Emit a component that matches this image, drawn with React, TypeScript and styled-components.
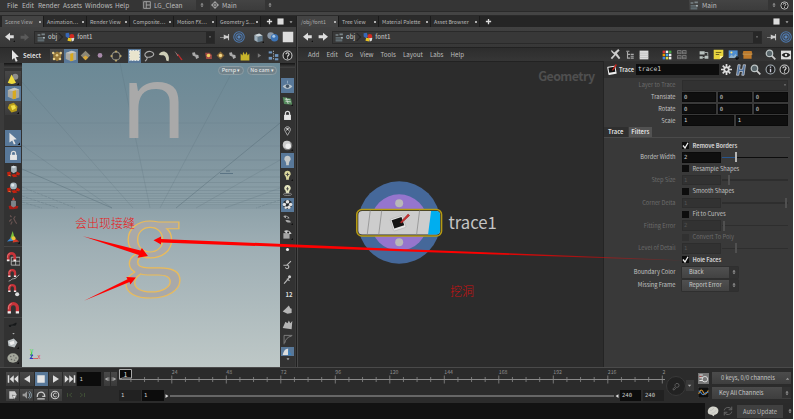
import React from "react";
import styled, { createGlobalStyle, css } from "styled-components";

const UI = `"Noto Sans CJK SC", "Open Sans", sans-serif`;

const Global = createGlobalStyle`
  html, body { margin: 0; background: #fff; }
  * { box-sizing: border-box; }
`;

/* ---------- icons, all on a 16x16 grid ---------- */

const cube = (c: string, side: string, top: string) => (
  <g>
    <path d="M2 4.5 7 7v8L2 12z" fill={c} />
    <path d="M7 7l7-2v8l-7 2z" fill={side} />
    <path d="M2 4.5 9 2l5 3-7 2z" fill={top} />
  </g>
);
const corner = <path d="M13 16h3v-3z" fill="#111" />;
const magnet = (x: number, y: number, s: number) => (
  <g transform={`translate(${x} ${y}) scale(${s})`} fill="none">
    <path d="M2 13V7a5 5 0 0 1 10 0v6" stroke="#c8343a" strokeWidth="4" />
    <path d="M2 11.5V14M12 11.5V14" stroke="#eee" strokeWidth="4" />
    <path d="M1 9V6a5 5 0 0 1 4-4" stroke="#e98a8a" strokeWidth="1" />
  </g>
);
const handles = (
  <g fill="#c3210f">
    <path d="M0 9l4-1 1 3-4 3zM12 8l4 2-1 3-4-1zM5 12l5-1 3 3-5 1z" />
    <path d="M1 13l3-1 1 2z" fill="#f07030" />
  </g>
);

const ICONS: Record<string, React.ReactNode> = {
  layout: <g fill="none" stroke="#bbb" strokeWidth="1.5"><rect x="1.5" y="1.5" width="13" height="13" /><path d="M6.5 1.5v13M6.5 8h8" /></g>,
  compass: <g fill="none" stroke="#bbb" strokeWidth="1.6"><circle cx="8" cy="8" r="5" /><path d="M8 0v5M8 11v5M0 8h5M11 8h5" /><circle cx="8" cy="8" r="1" fill="#ccc" /></g>,
  updown: <path d="M8 2l4 5H4zM8 14l4-5H4z" fill="#999" />,
  back: <><path d="M0 7.5 8 1v4h6v5H8v4z" fill="#ddd" />{corner}</>,
  fwd: <path d="M16 7.5 8 1v4H1v5h7v4z" fill="#ddd" />,
  fwdOff: <path d="M16 7.5 8 1v4H1v5h7v4z" fill="#5a5a5a" />,
  clap: <g fill="#7a8488"><path d="M1 2l5 0v3H1zM8 1h6v3H8z" /><path d="M1 7h8v3H1zM1 11h12v4H1z" fill="#5f6b70" /><path d="M10 7h4v3h-4z" fill="#a8b4b8" /></g>,
  font: <g><path d="M1 2l5-1 2 6-3 3-4-3z" fill="#3768b8" /><circle cx="11" cy="7" r="3.8" fill="#d22a20" /><path d="M5 9l6 1-1 5-6-1z" fill="#e8c324" /><path d="M10 10l5-1-1 5-3 1z" fill="#ddd" /></g>,
  pin: <path d="M0 8h6V4l4 2h3V3h1.5v10H13v-3h-3l-4 2V8.8H0z" fill="#ccc" />,
  target: <g fill="none" stroke="#4d78ad" strokeWidth="1.5"><circle cx="8" cy="8" r="7" /><circle cx="8" cy="8" r="4.2" /><circle cx="8" cy="8" r="1.6" fill="#80a4cf" /></g>,
  cubeBlue: <>{cube("#9fb0bd", "#62798a", "#cdd8de")}{corner}</>,
  spheres: <><circle cx="5" cy="6" r="4.5" fill="#8a98a8" /><circle cx="10" cy="9" r="5" fill="#3c73b5" /><circle cx="9" cy="7" r="2" fill="#a8c7e6" /></>,
  square: <rect x="1" y="1" width="14" height="14" fill="#ddd" />,
  down: <path d="M4 6h8l-4 5z" fill="#aaa" />,
  up: <path d="M4 11h8L8 6z" fill="#999" />,
  plus: <path d="M6.5 2h3v4.500H14v3H9.500V14h-3V9.500H2v-3h4.500z" fill="#ddd" />,
  cursor: <path d="M4 0l9 9-4 .5 2.500 5-2.500 1-2-5L4 13z" fill="#e4e4e4" />,
  points: <><path d="M3 5l5-3 6 3-1 7-5 3-5-4z" fill="#98793a" /><g fill="#e8cf8c"><circle cx="3" cy="4" r="1.700" /><circle cx="13" cy="4" r="1.700" /><circle cx="8" cy="7" r="1.700" /><circle cx="4" cy="12" r="1.700" /><circle cx="12" cy="12" r="1.700" /></g></>,
  cubeFace: <><path d="M1 4l8-3 6 2v10l-7 2-7-3z" fill="#a9a9a2" /><path d="M1 4l8-3 6 2-7 2z" fill="#c4c6c2" /><path d="M7 5l4-1v10l-4 1z" fill="#d8aa1f" /></>,
  diamond: <><path d="M8 1l7 7-7 7-7-7z" fill="#8c8878" /><path d="M8 8l4 3-4 4-4-4z" fill="#d9a93a" /></>,
  orb: <circle cx="8" cy="7" r="3.800" fill="#a88aab" />,
  ringDot: <><circle cx="8" cy="8" r="5.500" fill="none" stroke="#8c8c84" strokeWidth="1.600" /><g fill="#b9a56c"><circle cx="8" cy="2" r="1.500" /><circle cx="8" cy="14" r="1.500" /><circle cx="2" cy="8" r="1.500" /><circle cx="14" cy="8" r="1.500" /></g></>,
  boxSel: <rect x="2" y="2" width="12" height="12" fill="#e8e4cd" stroke="#fff" strokeDasharray="2 1.500" />,
  lasso: <path d="M5 10C-1 6 5 1 10 2s6 5 1 7-8-1-6 1-1 3-2 5" fill="none" stroke="#aaa" strokeWidth="1.500" />,
  brush: <path d="M1 6c3-5 8-5 11-2 3 4 3 7 2 11l-3-1c0-4-2-7-4-7s-4 0-6-1z" fill="#cfcfb8" />,
  laser: <><path d="M2 1l6 7-1 1z" fill="#b99" /><path d="M6 6l2 0 6 8-2 1z" fill="#c02a2a" /></>,
  snapA: <path d="M2 3l5-1 1 4 5 1 1 5-5 2-1-4-5-2z" fill="#aaa" />,
  snapB: <><path d="M2 3h8l4 4v7H4z" fill="#a14a46" /><circle cx="8" cy="8" r="3.200" fill="#f0cf60" /></>,
  snapC: <><path d="M8 1l7 7-7 7-7-7z" fill="#8b6a35" /><circle cx="8" cy="8" r="3" fill="#f3d889" /></>,
  crown: <path d="M1 4l3 3 1-6 3 5 3-5 1 6 3-3v11H1z" fill="#c9b52b" />,
  play: <path d="M5 4l6 4-6 4z" fill="#777" />,
  blueNodes: <><path d="M8 1v14" stroke="#ccc" strokeDasharray="2 1.500" /><g fill="#6f95bd"><rect x="1" y="2" width="5" height="3" /><rect x="1" y="10" width="5" height="4" /><rect x="10" y="6" width="5" height="4" /><rect x="10" y="12" width="5" height="3" /></g></>,
  help: <><circle cx="8" cy="8" r="6.500" fill="#222" stroke="#ccc" strokeWidth="1.500" /><path d="M5.700 6.300c0-3 4.600-3 4.600 0 0 1.700-2.300 1.700-2.300 3.400M8 11v1.600" stroke="#ddd" strokeWidth="1.700" fill="none" /></>,
  info: <><circle cx="8" cy="8" r="6.500" fill="#222" stroke="#aab4bb" strokeWidth="1.500" /><path d="M8 7v5M8 3.800v1.700" stroke="#ccd" strokeWidth="2" /></>,
  cone: <><circle cx="11" cy="5" r="4" fill="#8c8c8c" /><path d="M6 2l6 11c-3 2-8 2-11 0z" fill="#eedb3c" />{corner}</>,
  gold: <><path d="M3 3l6-2 5 5-1 6-7 2-5-6z" fill="#b89d1a" /><path d="M5 5l5-1 2 4-5 3z" fill="#f1e04a" />{corner}</>,
  cursorHl: <><path d="M3 1l9 8-4 .5 2.500 5-2 1-2-5L3 13z" fill="#e4e4e4" />{corner}</>,
  lock: <><path d="M5 8V5a3 3 0 0 1 6 0v3" fill="none" stroke="#ddd" strokeWidth="1.800" /><rect x="3" y="7" width="10" height="7.500" fill="#e6e6e6" /></>,
  move: <>{handles}<path d="M5 2l3-1 4 1v6l-4 2-3-2z" fill="#a5b0b6" /><path d="M5 2l3-1 4 1-4 2z" fill="#d4dde2" /></>,
  rotate: <>{handles}<circle cx="8" cy="6" r="4.200" fill="#a5b4bd" /><circle cx="7" cy="5" r="2" fill="#dde6ea" /></>,
  scale: <><path d="M2 11l4-1 4 1 4 0-1 3-5 1-5 0z" fill="#a91d16" /><path d="M8 0l2 4H6z" fill="#e03a30" /><path d="M5 5l3-1 3 1v6l-3 2-3-2z" fill="#7d858a" /></>,
  pose: <path d="M4 2l2 2M11 3L9 6l2 4 2 3M6 7l-3 3M7 10l-2 4" stroke="#6a5553" strokeWidth="1.500" fill="none" />,
  axes: <><path d="M7 0l2.500 9H4z" fill="#7ac13c" /><path d="M8 8l7 5-8 1z" fill="#d03a2a" /><path d="M0 13l5-5 3 4z" fill="#3c86d0" /><circle cx="8" cy="9" r="2.500" fill="#e9c83b" />{corner}</>,
  magGrid: <><path d="M6 6h10v9H6zM11 6v9M6 10.500h10" fill="none" stroke="#b8b8b8" />{magnet(1, 0, 0.75)}</>,
  magCurve: <><path d="M2 15c4-1 3-3 6-3s4-2 7-5" fill="none" stroke="#bbb" />{magnet(1.5, 0, 0.7)}</>,
  magPoint: <>{magnet(1.5, 0, 0.7)}<circle cx="12.500" cy="12.500" r="2.500" fill="#ddd" /></>,
  mag: <>{magnet(0.8, 0, 1)}</>,
  plane: <><path d="M1 8l6-1 6-3 1 2-4 5-8 0z" fill="#17191a" /><path d="M5 10h6" stroke="#555" /></>,
  paint: <><path d="M1 5l8-3 5 5-4 7-8-2z" fill="#bcc2c4" /><path d="M3 7l6-2 1 4-5 2z" fill="#eee" />{corner}</>,
  disc: <><ellipse cx="8" cy="8" rx="7.500" ry="6.300" fill="#a3a69b" /><g fill="#666"><circle cx="5" cy="6" r="1" /><circle cx="9" cy="5" r="1" /><circle cx="12" cy="8" r="1" /><circle cx="6" cy="10" r="1" /><circle cx="10" cy="11" r="1" /></g>{corner}</>,
  eyeGrid: <><path d="M1 9c4-4 10-4 14 0-4 5-10 5-14 0z" fill="#b9c4cc" /><circle cx="8" cy="9" r="2.500" fill="#3f5163" /><path d="M8 1v4" stroke="#a9bdcf" /></>,
  green: <><path d="M1 3l12 2 2 9-12-1z" fill="#548a5b" /><path d="M4 6l8 1M5 9l8 1M6 4l3 9" stroke="#cbd6cc" strokeWidth="1.300" />{corner}</>,
  pinX: <><path d="M8 15L4 8a4.200 4.200 0 1 1 8 0z" fill="none" stroke="#bbb" strokeWidth="1.200" /><path d="M6.200 4l3.600 4M9.800 4L6.200 8" stroke="#fff" strokeWidth="1.400" /></>,
  ball: <><circle cx="8" cy="8" r="7" fill="#777" /><circle cx="7" cy="7" r="5.800" fill="#ccc" /><circle cx="9" cy="9" r="4" fill="#eee" />{corner}</>,
  bulb: <path d="M8 1a4.500 4.500 0 0 1 3 8l-1 3v3H6v-3L5 9a4.500 4.500 0 0 1 3-8z" fill="#c4c8c8" />,
  bulbY: <><path d="M8 1a4.500 4.500 0 0 1 3 8l-1 3v2H6v-2L5 9a4.500 4.500 0 0 1 3-8z" fill="#d9d69d" /><path d="M8 4v5M5.500 6.500h5" stroke="#444" strokeWidth="1.300" />{corner}</>,
  bulbG: <><path d="M8 0a4.500 4.500 0 0 1 3 8l-1 4H6L5 8a4.500 4.500 0 0 1 3-8z" fill="#e4e4bd" /><path d="M8 3v5M6 5.500h4" stroke="#444" strokeWidth="1.200" /><ellipse cx="8" cy="13.500" rx="6" ry="1.700" fill="none" stroke="#aaa" /></>,
  cluster: <><circle cx="8" cy="8" r="6.500" fill="#1d2126" /><g fill="#e2e2e2"><circle cx="8" cy="4" r="2.700" /><circle cx="12.500" cy="8" r="2.500" /><circle cx="3.500" cy="8" r="2.500" /><circle cx="10" cy="12" r="2.500" /><circle cx="5.500" cy="12.500" r="2" /></g></>,
  eyes: <><path d="M2 3c3-2 7 0 9 3-4 1-8 0-9-3zM5 9c3-1 7 0 8 3-4 1-7 0-8-3z" fill="#aaa" /><circle cx="7" cy="5" r="1.300" fill="#222" />{corner}</>,
  cubeEyes: <><rect x="2" y="6" width="9" height="8" fill="#a5a5a5" /><path d="M3 3c4-3 9 0 11 4-4 1-9 0-11-4z" fill="#ccc" /><circle cx="9" cy="5" r="1.500" fill="#222" />{corner}</>,
  dot: <circle cx="8" cy="8" r="2.200" fill="#eee" />,
  key1: <path d="M2 9h5l6-6M5 12a2.500 2.500 0 1 0 3-3" fill="none" stroke="#bbb" strokeWidth="1.600" />,
  key2: <><path d="M3 14l7-8" stroke="#bbb" strokeWidth="1.600" /><circle cx="11" cy="4" r="2.200" fill="#ccc" /><path d="M7 7l4 3" stroke="#bbb" strokeWidth="1.600" /></>,
  poly: <path d="M1 11l5-5 4-4 2 4 2 1v6l-6 1z" fill="#b5b5b5" />,
  poly2: <path d="M1 13L5 4l3 2 2-4 2 4 3-3-1 12z" fill="#b5b5b5" />,
  angle: <path d="M3 15V2h12M14 3C8 4 5 8 4 13" fill="none" stroke="#999" />,
  fin: <><path d="M1 13c2-8 5-9 8-9v9z" fill="#ddd" /><path d="M9 13V4l5 9z" fill="#3d83bf" /></>,
  tools: <path d="M2 1l4 4 1.500-1L12 0l2 2-4 4 5 7-2 2-5-6-5 6-2-2 5-5-4-4z" fill="#ccc" />,
  tree: <path d="M2 2h5M4 3v11M4 7h4M4 13h4M9 7h5M9 13h5M9 10h5" stroke="#aaa" strokeWidth="1.800" />,
  list: <><path d="M1 1h14v14H1z" fill="#ddd" /><path d="M1 5h14M1 8.500h14M1 12h14" stroke="#aaa" strokeWidth=".8" /></>,
  swatches: <>{["#d33", "#eee", "#4a4", "#e90", "#4ae", "#eee", "#48d", "#dd4", "#eee"].map((c, i) => <rect key={i} x={1 + (i % 3) * 5} y={1 + Math.floor(i / 3) * 5} width="4" height="4" fill={c} />)}</>,
  gridOff: <>{[0, 1, 2, 3].map((i) => <g key={i} fill="none" stroke="#888" strokeWidth="1.200"><rect x={1 + (i % 2) * 8} y={1 + Math.floor(i / 2) * 8} width="5.500" height="5" /><path d={`M${1 + (i % 2) * 8} ${3.5 + Math.floor(i / 2) * 8}h5`} /></g>)}</>,
  nodes: <g fill="#b9c2bf"><path d="M1 2h8v5H1zM9 9h6v5H9zM1 10h5v4H1z" /><path d="M9 4h5v5M6 12h3" fill="none" stroke="#b9c2bf" strokeWidth="1.300" /></g>,
  note: <><path d="M1 1h14v9l-5 5H1z" fill="#e7d53e" /><path d="M10 15v-5h5z" fill="#fff3a0" /><path d="M4 5h8M4 8h5" stroke="#554d15" strokeWidth="1.200" /></>,
  image: <><path d="M1 2h13v11H1z" fill="#4e8ed0" /><path d="M1 13l4-5 3 3 3-4 3 6z" fill="#8fb0c8" /><circle cx="5" cy="5" r="1.500" fill="#ffe37a" /><path d="M10 13h6M13 10v6" stroke="#000" strokeWidth="1.500" /></>,
  chest: <><path d="M2 3h12l1 4H1zM2 8h12v6H2z" fill="#bf7a2a" /><path d="M1 7.500h14" stroke="#e8ab54" strokeWidth="1.500" /></>,
  search: <><circle cx="6.500" cy="6.500" r="4.700" fill="#59666b" stroke="#bcc4c4" strokeWidth="1.800" /><path d="M10 10l5 5" stroke="#ccc" strokeWidth="2.500" /></>,
  eyeBox: <><rect x="0" y="1" width="16" height="14" fill="#ddd" /><path d="M1 8c4-5 10-5 14 0-4 5-10 5-14 0z" fill="#222" /><circle cx="8" cy="8" r="2" fill="#ddd" /></>,
  trace: <g transform="rotate(-10 8 8)"><rect x="1" y="3" width="12" height="12" rx="1" fill="#eee" /><rect x="2.500" y="4.500" width="9" height="7.500" fill="#111" /><path d="M7 9l7-8 1.500 1.500-7 7z" fill="#c8231b" /></g>,
  gear: <><path d="M8 0v16M0 8h16M2.500 2.500l11 11M13.500 2.500l-11 11" stroke="#ddd" strokeWidth="2.500" /><circle cx="8" cy="8" r="4.500" fill="#ddd" /><circle cx="8" cy="8" r="2" fill="#333" /></>,
  hda: <path d="M4 1h3L6 7h4l1-6h3l-2 14H9l1-5H6l-1 5H2z" fill="#4c6f9c" stroke="#ddd" strokeWidth=".9" />,
  first: <path d="M1 3h2v10H1zM9 3v10L3.500 8zM15 3v10L9.500 8z" fill="#ddd" />,
  prev: <path d="M12 3v10L4 8z" fill="#ddd" />,
  stop: <path d="M3 3h10v10H3z" fill="#e4e4e4" />,
  next: <path d="M4 3v10l8-5z" fill="#ddd" />,
  last: <path d="M13 3h2v10h-2zM7 3v10l5.500-5zM1 3v10l5.500-5z" fill="#ddd" />,
  stepB: <path d="M10 3v10L2 8zM12 3h2v10h-2z" fill="#aaa" />,
  stepF: <path d="M6 3v10l8-5zM2 3h2v10H2z" fill="#aaa" />,
  doc: <><path d="M2 2h9l3 5-3 7H2z" fill="#ccc" /><path d="M7 8l8 3-4 1-1 4z" fill="#fff" stroke="#222" strokeWidth=".7" /></>,
  speaker: <><path d="M1 6h3l4-4v12l-4-4H1z" fill="#999" /><path d="M10 4c3 2 3 6 0 9M12 2c4 4 4 9 0 12" fill="none" stroke="#9bb4c4" strokeWidth="1.300" /></>,
  loop: <path d="M2 11c0-10 12-10 12-1l-4 0M2 14h12" fill="none" stroke="#ccc" strokeWidth="2" />,
  clock: <><circle cx="8" cy="8" r="6" fill="none" stroke="#ccc" strokeWidth="1.800" /><path d="M10.500 6a3 3 0 1 0 0 4" fill="none" stroke="#ccc" strokeWidth="1.500" /></>,
  keyL: <path d="M3 4v8M12 4L7 8l5 4" fill="none" stroke="#46593a" strokeWidth="1.500" />,
  keyR: <path d="M13 4v8M4 4l5 4-5 4" fill="none" stroke="#46593a" strokeWidth="1.500" />,
  channels: <><rect width="16" height="16" fill="#777" /><path d="M2 3h5M2 7h5M2 11h5" stroke="#e4e4e4" strokeWidth="1.500" /><circle cx="10" cy="9" r="4" fill="none" stroke="#ddd" strokeWidth="1.400" /><path d="M2 5h3" stroke="#c33" /></>,
  graph: <><rect width="16" height="16" fill="#0d0d0d" stroke="#555" /><path d="M1 10c3-8 5-6 7-2s4 3 7-3" fill="none" stroke="#d99a35" strokeWidth="1.500" /><path d="M1 6c4 0 4 6 7 5s3-5 7-3" fill="none" stroke="#4b83c4" strokeWidth="1.500" /></>,
  brain: <><path d="M1 9c0-8 12-9 14-3 1 4-2 7-5 7l-1 2-3-2C3 13 1 12 1 9z" fill="#d4d4cc" /><path d="M4 7c2 1 4-1 5-3M6 11c3 0 5-2 6-4" fill="none" stroke="#bbb" /></>,
  refresh: <path d="M2 7c1-6 10-6 12-1M14 1v5h-5M14 9c-1 6-10 6-12 1M2 15v-5h5" fill="none" stroke="#666" strokeWidth="1.600" />,
  keyBig: <path d="M9 2.500a3.500 3.500 0 1 1 0 7 3.500 3.500 0 0 1-1-.2L4 14H2v-2l4-4A3.500 3.500 0 0 1 9 2.500z" fill="none" stroke="#666" strokeWidth="1.500" />,
};

const Svg = styled.svg<{ $w: number }>`
  display: block;
  flex: none;
  width: ${(p) => p.$w}px;
  height: ${(p) => p.$w}px;
`;
const Icon = ({ n, s = 10 }: { n: string; s?: number }) => (
  <Svg $w={s} viewBox="0 0 16 16">{ICONS[n]}</Svg>
);

/* ---------- frame ---------- */

const Window = styled.div`
  position: relative;
  width: 793px;
  height: 419px;
  display: flex;
  flex-direction: column;
  overflow: hidden;
  background: #2c2c2c;
  color: #bdbdbd;
  font: 6.2px/10px ${UI};
  white-space: nowrap;
  cursor: default;
`;
const Gap = styled.div<{ $w?: number; $h?: number }>`
  flex: none;
  width: ${(p) => p.$w ?? 0}px;
  height: ${(p) => p.$h ?? 0}px;
`;
const Grow = styled.div`flex: 1;`;

const TopMenu = styled.div`
  flex: none;
  height: 11px;
  display: flex;
  align-items: center;
  background: #353535;
  font-size: 6.5px;
  line-height: 9px;
  padding-bottom: 1px;
`;
const TopItem = styled.span<{ $w: number }>`
  width: ${(p) => p.$w}px;
`;
const Combo = styled.div<{ $w: number }>`
  width: ${(p) => p.$w}px;
  height: 10px;
  display: flex;
  align-items: center;
  gap: 3px;
  background: linear-gradient(#444, #3c3c3c);
  padding: 0 1px;
`;
const Seam = styled.div`
  flex: none;
  height: 5px;
  background: linear-gradient(#2a2a2a 0 1px, #444 1px 4px, #2a2a2a 4px);
`;

const Workspace = styled.div`
  flex: none;
  display: flex;
  height: 351px;
  background: #3b3b3b;
`;
const Pane = styled.section<{ $w: number }>`
  flex: none;
  width: ${(p) => p.$w}px;
  display: flex;
  flex-direction: column;
`;
const TabStrip = styled.div`
  flex: none;
  height: 11px;
  display: flex;
  align-items: stretch;
  background: #252525;
`;
const PaneTab = styled.div<{ $w: number; $on?: boolean }>`
  width: ${(p) => p.$w}px;
  display: flex;
  align-items: center;
  justify-content: space-between;
  padding: 0 2px 0 3px;
  font-size: 5.3px;
  border-right: 1px solid #1b1b1b;
  background: ${(p) => (p.$on ? "#434343" : "#2b2b2b")};
  color: ${(p) => (p.$on ? "#aaa" : "#b9b9b9")};
`;
const Dot = styled.i`
  width: 2px;
  height: 2px;
  background: #b0b0b0;
`;
const TabTools = styled.div`
  display: flex;
  align-items: center;
  gap: 4px;
  padding-left: 5px;
`;
const PathBar = styled.div`
  flex: none;
  height: 20px;
  display: flex;
  align-items: center;
  padding-left: 5px;
  background: linear-gradient(#414141, #373737);
`;
const PathField = styled.div<{ $w: number }>`
  width: ${(p) => p.$w}px;
  height: 13px;
  display: flex;
  align-items: center;
  gap: 2px;
  padding-left: 2px;
  background: #383838;
  border: 1px solid #2a2a2a;
  font-size: 6px;
  font-weight: 500;
`;
const DropEnd = styled.div`
  margin-left: auto;
  width: 8px;
  height: 11px;
  display: flex;
  align-items: center;
  justify-content: center;
  background: #272727;
`;
const Chevron = styled.i`
  width: 6px;
  height: 6px;
  margin: 0 1px 0 -3px;
  border: solid #252525;
  border-width: 1px 1px 0 0;
  transform: rotate(45deg);
`;
const ToolRow = styled.div<{ $h: number }>`
  flex: none;
  height: ${(p) => p.$h}px;
  display: flex;
  align-items: center;
  background: linear-gradient(#2d2d2d, #363636);
  border-top: 1px solid #222;
`;
const Cell = styled.div<{ $w: number; $h?: number; $hl?: boolean; $box?: boolean }>`
  flex: none;
  width: ${(p) => p.$w}px;
  height: ${(p) => p.$h ?? 14}px;
  display: flex;
  align-items: center;
  justify-content: center;
  overflow: hidden;
  ${(p) => p.$box && css`background: linear-gradient(#484848, #3a3a3a);`}
  ${(p) => p.$hl && css`background: #587899;`}
`;
const Bold = styled.b<{ $w: number; $s?: number }>`
  width: ${(p) => p.$w}px;
  font-size: ${(p) => p.$s ?? 5.9}px;
  color: #ddd;
`;

/* ---------- scene view ---------- */

const SceneBody = styled.div`
  flex: 1;
  display: flex;
  min-height: 0;
`;
const Shelf = styled.div<{ $w: number }>`
  width: ${(p) => p.$w}px;
  margin-left: ${(p) => (p.$w > 15 ? 4 : 0)}px;
  background: #323232;
  display: flex;
  flex-direction: column;
  align-items: center;
  overflow: hidden;
`;
const ShelfHead = styled.div`
  flex: none;
  align-self: stretch;
  height: 5px;
  background: linear-gradient(#151515, #444);
`;
const Rule = styled.div`
  flex: none;
  align-self: stretch;
  height: 1px;
  background: #444;
`;
const Viewport = styled.div`
  position: relative;
  width: 258px;
  background: linear-gradient(#6b8996 0%, #798f9a 23%, #8ca0a8 46%, #9eaeb4 60%, #bec8c7 100%);
`;
const Fill = styled.svg`
  display: block;
  width: 100%;
  height: 100%;
  overflow: visible;
`;
const CamBadges = styled.div`
  position: absolute;
  top: 3px;
  right: 3px;
  display: flex;
  gap: 3px;
`;
const Badge = styled.span<{ $w: number }>`
  width: ${(p) => p.$w}px;
  height: 9px;
  border-radius: 5px;
  border: 1px solid #8c9da4;
  background: #71828a;
  color: #eee;
  font-size: 5.4px;
  line-height: 7px;
  text-align: center;
`;

const horizon = [123, 146, 160, 170, 177, 182.5, 187, 190.5, 193.5, 196, 198.5, 200.5, 202.5, 204.5, 206, 208];

const Scene = () => (
  <Viewport>
    <Fill viewBox="22 63 258 304">
      <g stroke="#4c626d" strokeWidth=".6" fill="none">
        {horizon.map((y, i) => <path key={y} d={`M22 ${y}H280`} opacity={i < 2 ? 0.22 : 0.32} />)}
        {[[22, 82, 133, 208], [22, 145, 112, 208], [120, 63, 150, 208], [230, 76, 160, 208], [280, 160, 196, 208], [280, 188, 225, 208]].map((l, i) => (
          <path key={i} d={`M${l[0]} ${l[1]}L${l[2]} ${l[3]}`} opacity=".3" />
        ))}
        <path d="M22 169L112 208M280 123L176 208" opacity=".6" />
        <path d="M22 187L75 208M22 196l36 12M22 202l20 6M280 200l-24 8" opacity=".4" strokeDasharray="3 1" />
        <path d="M220 173.500h13M226 171h4" stroke="#3f5a70" />
      </g>
      <text x="120" y="138" fontFamily="Open Sans" fontSize="103" textLength="67.500" lengthAdjust="spacingAndGlyphs" fill="#a9a9a9">n</text>
      <text x="120.500" y="274" fontFamily="Noto Sans CJK SC" fontSize="96" textLength="61" lengthAdjust="spacingAndGlyphs" fill="#a9a9a9" stroke="#e9bb5b" strokeWidth="1.200">g</text>
      <path d="M31 358.500h7" stroke="#c66" />
      <path d="M31.500 358.500v-6" stroke="#4c4" />
      <path d="M30 355h3l-3 3.500h3" fill="none" stroke="#33c" />
      <text x="30" y="352.500" fontFamily="Noto Sans CJK SC" fontSize="6" fill="#3d3">y</text>
      <text x="37.500" y="358.500" fontFamily="Noto Sans CJK SC" fontSize="6" fill="#d44">x</text>
    </Fill>
    <CamBadges><Badge $w={26}>Persp ▾</Badge><Badge $w={30}>No cam ▾</Badge></CamBadges>
  </Viewport>
);

const leftTools: [string, number, number?, string?][] = [
  ["", 3], ["cone", 15, 12, "b"], ["cubeFace", 15, 13, "h"], ["gold", 14, 12, "b"], ["", 15],
  ["cursorHl", 16, 13, "h"], ["", 1], ["lock", 16, 11, "h"], ["move", 16, 13], ["rotate", 16, 13],
  ["scale", 17, 13], ["pose", 16, 12], ["axes", 18, 13], ["-", 1], ["", 2], ["magGrid", 19, 14],
  ["magCurve", 14, 13], ["magPoint", 17, 13], ["mag", 18, 13], ["-", 1], ["plane", 13, 10],
  ["down", 4, 5], ["paint", 16, 12], ["disc", 14, 12],
];
const rightTools: [string, boolean?][] = [
  ["eyeGrid", true], ["green"], ["lock"], ["pinX"], ["ball"], ["bulb", true], ["bulbY"], ["bulbG"],
  ["cluster", true], ["eyes"], ["cubeEyes"], ["dot"], ["key1"], ["key2"], ["12"], ["poly"], ["poly2"], ["angle"],
];
const Count = styled.span`
  font: bold 6px/8px ${UI};
  color: #ddd;
  padding-left: 3px;
`;

const SceneTools = () => (
  <ToolRow $h={16}>
    <Gap $w={8} />
    <Cell $w={14}><Icon n="cursor" s={12} /></Cell>
    <Gap $w={1} />
    <Bold $w={27}>Select</Bold>
    <Cell $w={14} $box><Icon n="points" s={12} /></Cell>
    <Cell $w={14} $hl><Icon n="cubeFace" s={12} /></Cell>
    <Cell $w={15}><Icon n="diamond" s={11} /></Cell>
    <Cell $w={14}><Icon n="orb" s={10} /></Cell>
    <Cell $w={17}><Icon n="ringDot" s={12} /></Cell>
    <Gap $w={4} />
    <Cell $w={13} $hl><Icon n="boxSel" s={13} /></Cell>
    <Cell $w={15}><Icon n="lasso" s={12} /></Cell>
    <Cell $w={15}><Icon n="brush" s={12} /></Cell>
    <Cell $w={15}><Icon n="laser" s={11} /></Cell>
    <Gap $w={4} />
    <Cell $w={11}><Icon n="snapA" s={9} /></Cell>
    <Cell $w={14}><Icon n="snapB" s={9} /></Cell>
    <Cell $w={11}><Icon n="snapC" s={9} /></Cell>
    <Cell $w={13}><Icon n="snapA" s={9} /></Cell>
    <Cell $w={12}><Icon n="crown" s={10} /></Cell>
    <Cell $w={17}><Icon n="play" s={9} /></Cell>
    <Cell $w={11}><Icon n="blueNodes" s={11} /></Cell>
    <Grow />
    <Icon n="help" s={11} />
    <Gap $w={3} />
  </ToolRow>
);

const ScenePane = () => (
  <Pane $w={296}>
    <TabStrip>
      <Gap $w={2} />
      <PaneTab $w={42} $on>Scene View<Dot /></PaneTab>
      <PaneTab $w={43}>Animation…<Dot /></PaneTab>
      <PaneTab $w={43}>Render View<Dot /></PaneTab>
      <PaneTab $w={44}>Composite…<Dot /></PaneTab>
      <PaneTab $w={43}>Motion FX…<Dot /></PaneTab>
      <PaneTab $w={44}>Geometry S…<Dot /></PaneTab>
      <TabTools><Icon n="plus" s={7} /><Icon n="square" s={7} /><Icon n="down" s={6} /></TabTools>
    </TabStrip>
    <PathBar>
      <Icon n="back" s={10} /><Gap $w={5} /><Icon n="fwdOff" s={9} /><Gap $w={5} />
      <PathField $w={181}><Icon n="clap" s={9} />obj<Chevron /><Icon n="font" s={10} />font1<DropEnd><Icon n="down" s={4} /></DropEnd></PathField>
      <Gap $w={5} /><Icon n="pin" s={10} /><Gap $w={3} /><Icon n="target" s={12} /><Gap $w={8} />
      <Icon n="cubeBlue" s={11} /><Gap $w={3} /><Icon n="spheres" s={12} /><Gap $w={3} /><Icon n="square" s={12} />
    </PathBar>
    <SceneTools />
    <SceneBody>
      <Shelf $w={18}>
        <ShelfHead />
        {leftTools.map(([n, h, s, k], i) =>
          n === "-" ? <Rule key={i} /> : n === "" ? <Gap key={i} $h={h} /> : (
            <Cell key={i} $w={16} $h={h} $hl={k === "h"} $box={k === "b"}><Icon n={n} s={s} /></Cell>
          ))}
      </Shelf>
      <Scene />
      <Shelf $w={15}>
        <ShelfHead />
        <Gap $h={10} />
        {rightTools.map(([n, hl], i) => (
          <Cell key={i} $w={13} $h={14.95} $hl={hl}>{n === "12" ? <Count>12</Count> : <Icon n={n} s={11} />}</Cell>
        ))}
        <Cell $w={13} $h={9} $hl><Icon n="fin" s={11} /></Cell>
        <Icon n="down" s={6} />
      </Shelf>
    </SceneBody>
  </Pane>
);

/* ---------- network pane ---------- */

const Divider = styled.div`
  flex: none;
  width: 2px;
  background: #202020;
  border-right: 1px solid #474747;
`;
const NetBody = styled.div`
  flex: 1;
  display: flex;
  min-height: 0;
`;
const NetView = styled.div`
  position: relative;
  width: 305px;
  background: #2c2c2c;
  border-top: 1px solid #222;
`;

const Network = () => (
  <NetView>
    <Fill viewBox="298 61 305 306" fontFamily="Noto Sans CJK SC">
      <text x="538.500" y="80" fontSize="12.500" fontWeight="700" fill="#4f4f4f" textLength="57">Geometry</text>
      <circle cx="399" cy="222" r="41.300" fill="#45689a" />
      <circle cx="399" cy="222" r="28.300" fill="#9575cd" />
      <rect x="356.500" y="209" width="85" height="26.500" rx="5" fill="#2c2c2c" stroke="#b59a13" strokeWidth="1.600" />
      <rect x="358" y="210.500" width="82" height="23.500" rx="4" fill="#cdcdcd" />
      <path d="M431 210.500h5a4 4 0 0 1 4 4V230a4 4 0 0 1-4 4h-8z" fill="#00aeef" />
      <path d="M370 210l-3 24M381.500 210l-3 24M419.500 210l-3 24" stroke="#8e8e8e" strokeWidth=".8" />
      <circle cx="399" cy="202.800" r="4" fill="#b8b8b8" />
      <circle cx="399" cy="241.800" r="4" fill="#b8b8b8" />
      <g transform="rotate(-18 398 223)">
        <rect x="391.500" y="216.500" width="13" height="12.500" rx="1" fill="#e6e6e6" stroke="#aaa" strokeWidth=".5" />
        <rect x="392.800" y="217.800" width="10.400" height="8.800" fill="#161616" />
      </g>
      <path d="M400 222l8-8.500 1.500 1.500-8 7.500z" fill="#c33" stroke="#8e1c1c" strokeWidth=".5" />
      <text x="448.500" y="229" fontSize="17" fill="#c4c4c4" textLength="48.500" lengthAdjust="spacingAndGlyphs">trace1</text>
    </Fill>
  </NetView>
);

const Params = styled.div`
  width: 190px;
  padding: 0 3px 0 0;
  border-left: 1px solid #242424;
  background: #393939;
  display: flex;
  flex-direction: column;
`;
const ParamHead = styled.div`
  flex: none;
  height: 17px;
  display: flex;
  align-items: center;
  padding-left: 3px;
  background: #2f2f2f;
  margin-bottom: 1.5px;
`;
const NameField = styled.div`
  width: 83px;
  height: 11px;
  background: #0d0d0d;
  color: #ccc;
  font: 6.4px/10px "DejaVu Sans Mono", monospace;
  padding-left: 2px;
`;
const ParamRow = styled.div<{ $h: number; $off?: boolean }>`
  flex: none;
  height: ${(p) => p.$h}px;
  display: grid;
  grid-template-columns: 71.5px 106px;
  column-gap: 6.5px;
  align-items: center;
  color: ${(p) => (p.$off ? "#6c6c6c" : "#c2c2c2")};
  font-size: 5.7px;
`;
const Label = styled.span`
  text-align: right;
`;
const Controls = styled.div`
  display: flex;
  align-items: center;
  gap: 1.5px;
`;
const Strong = styled.b`
  font-size: 5.7px;
  letter-spacing: -0.1px;
  color: #ccc;
`;
const Field = styled.div<{ $off?: boolean; $w?: number }>`
  ${(p) => (p.$w ? css`flex: none; width: ${p.$w}px;` : css`flex: 1;`)}
  height: 10.6px;
  padding-left: 1px;
  background: ${(p) => (p.$off ? "#323232" : "#0f0f0f")};
  border: 1px solid ${(p) => (p.$off ? "#2d2d2d" : "#0a0a0a")};
  color: ${(p) => (p.$off ? "#555" : "#ccc")};
  font: 5.6px/8.600px "DejaVu Sans Mono", monospace;
  display: flex;
  justify-content: space-between;
  align-items: center;
`;
const Slider = styled.div`
  flex: 1;
  height: 10px;
  display: flex;
  align-items: center;
`;
const Track = styled.i<{ $w?: number; $c: string }>`
  ${(p) => (p.$w !== undefined ? css`flex: none; width: ${p.$w}px;` : css`flex: 1;`)}
  height: 1.5px;
  background: ${(p) => p.$c};
`;
const Knob = styled.i<{ $off?: boolean }>`
  width: 1.5px;
  height: 10px;
  background: ${(p) => (p.$off ? "#505050" : "#b5b5b5")};
`;
const Check = styled.i<{ $off?: boolean }>`
  width: 7px;
  height: 7px;
  background: ${(p) => (p.$off ? "#313131" : "#0d0d0d")};
  margin-right: 2px;
`;
const Select = styled.div`
  width: 56px;
  height: 11px;
  padding-left: 7px;
  display: flex;
  align-items: center;
  justify-content: space-between;
  background: linear-gradient(#505050, #424242);
  box-shadow: 0 0 0 .5px #262626;
  color: #ccc;
`;
const Stepper = styled.span`
  width: 9px;
  height: 11px;
  display: flex;
  align-items: center;
  justify-content: center;
  background: #313131;
`;
const ParamTabs = styled.div`
  flex: none;
  height: 11.5px;
  display: flex;
  gap: 1px;
  align-items: stretch;
  border-bottom: 1px solid #4a4a4a;
`;
const ParamTab = styled.b<{ $on?: boolean }>`
  width: 23.5px;
  text-align: center;
  font-size: 5.8px;
  color: #ddd;
  background: ${(p) => (p.$on ? "#525252" : "#2f2f2f")};
`;

const Vector = ({ label, v, h = 11.8 }: { label: string; v: string[]; h?: number }) => (
  <ParamRow $h={h}><Label>{label}</Label><Controls>{v.map((x, i) => <Field key={i}>{x}</Field>)}</Controls></ParamRow>
);
const Ranged = ({ label, v, at, off }: { label: string; v: string; at: number; off?: boolean }) => (
  <ParamRow $h={11.4} $off={off}>
    <Label>{label}</Label>
    <Controls>
      <Field $w={38.5} $off={off}>{v}</Field>
      <Slider><Track $w={at} $c={off ? "#2e2e2e" : "#26558e"} /><Knob $off={off} /><Track $c={off ? "#2e2e2e" : "#0d0d0d"} /></Slider>
    </Controls>
  </ParamRow>
);
const Toggle = ({ label, on, off }: { label: string; on?: boolean; off?: boolean }) => (
  <ParamRow $h={11.4} $off={off}>
    <span />
    <Controls>
      <Check $off={off}>{on && <Svg $w={7} viewBox="0 0 7 7"><path d="M1 3.500L3 6 6 .8" fill="none" stroke="#eee" strokeWidth="1.300" /></Svg>}</Check>
      {on ? <Strong>{label}</Strong> : label}
    </Controls>
  </ParamRow>
);
const Choice = ({ label, v }: { label: string; v: string }) => (
  <ParamRow $h={13.2}><Label>{label}</Label><Controls><Select>{v}<Stepper><Icon n="updown" s={6} /></Stepper></Select></Controls></ParamRow>
);

const Parameters = () => (
  <Params>
    <ParamHead>
      <Icon n="trace" s={11} /><Gap $w={1} /><Bold $w={17} $s={5.7}>Trace</Bold><NameField>trace1</NameField><Gap $w={2} />
      <Icon n="gear" s={11} /><Gap $w={3} /><Icon n="hda" s={12} /><Gap $w={3} /><Icon n="search" s={11} /><Gap $w={4} />
      <Icon n="info" s={11} /><Gap $w={3} /><Icon n="help" s={11} />
    </ParamHead>
    <ParamRow $h={11.8} $off><Label>Layer to Trace</Label><Controls><Field $off><span /><Icon n="down" s={4} /></Field></Controls></ParamRow>
    <Vector label="Translate" v={["0", "0", "0"]} />
    <Vector label="Rotate" v={["0", "0", "0"]} />
    <Vector label="Scale" v={["1", "1"]} />
    <ParamTabs><ParamTab>Trace</ParamTab><ParamTab $on>Filters</ParamTab></ParamTabs>
    <Gap $h={2} />
    <Toggle label="Remove Borders" on />
    <Ranged label="Border Width" v="2" at={13} />
    <Toggle label="Resample Shapes" />
    <Ranged label="Step Size" v="1" at={6} off />
    <Toggle label="Smooth Shapes" />
    <Ranged label="Corner Delta" v="1" at={63} off />
    <Toggle label="Fit to Curves" />
    <Ranged label="Fitting Error" v="2" at={1} off />
    <Toggle label="Convert To Poly" off />
    <Ranged label="Level of Detail" v="1" at={13} off />
    <Toggle label="Hole Faces" on />
    <Choice label="Boundary Color" v="Black" />
    <Choice label="Missing Frame" v="Report Error" />
  </Params>
);

const NetMenu = styled.span`
  display: flex;
  gap: 7px;
  font-size: 6.2px;
`;

const NetworkPane = () => (
  <Pane $w={495}>
    <TabStrip>
      <PaneTab $w={41} $on>/obj/font1<Dot /></PaneTab>
      <PaneTab $w={40}>Tree View<Dot /></PaneTab>
      <PaneTab $w={52}>Material Palette<Dot /></PaneTab>
      <PaneTab $w={49}>Asset Browser<Dot /></PaneTab>
      <TabTools><Icon n="plus" s={7} /></TabTools>
      <Grow />
      <TabTools><Icon n="square" s={7} /><Icon n="down" s={6} /></TabTools>
      <Gap $w={3} />
    </TabStrip>
    <PathBar>
      <Icon n="back" s={10} /><Gap $w={5} /><Icon n="fwd" s={10} /><Gap $w={4} />
      <PathField $w={430}><Icon n="clap" s={9} />obj<Chevron /><Icon n="font" s={10} />font1<DropEnd><Icon n="down" s={4} /></DropEnd></PathField>
      <Gap $w={5} /><Icon n="pin" s={10} /><Gap $w={3} /><Icon n="target" s={12} />
    </PathBar>
    <ToolRow $h={14}>
      <Gap $w={10} />
      <NetMenu>{["Add", "Edit", "Go", "View", "Tools", "Layout", "Labs", "Help"].map((m) => <span key={m}>{m}</span>)}</NetMenu>
      <Grow />
      <Cell $w={14}><Icon n="tools" s={11} /></Cell>
      <Cell $w={15}><Icon n="tree" s={10} /></Cell>
      <Cell $w={14}><Icon n="list" s={10} /></Cell>
      <Gap $w={9} />
      <Cell $w={14}><Icon n="swatches" s={10} /></Cell>
      <Cell $w={15}><Icon n="gridOff" s={10} /></Cell>
      <Gap $w={8} />
      <Cell $w={14}><Icon n="nodes" s={10} /></Cell>
      <Cell $w={15}><Icon n="note" s={11} /></Cell>
      <Cell $w={14}><Icon n="image" s={11} /></Cell>
      <Cell $w={15}><Icon n="chest" s={11} /></Cell>
      <Gap $w={8} />
      <Cell $w={15}><Icon n="search" s={11} /></Cell>
      <Cell $w={15}><Icon n="eyeBox" s={10} /></Cell>
    </ToolRow>
    <NetBody><Network /><Parameters /></NetBody>
  </Pane>
);

/* ---------- playbar ---------- */

const PlayBar = styled.div`
  flex: none;
  height: 36px;
  display: flex;
  background: #2b2b2b;
  border-top: 1px solid #4a4a4a;
`;
const Transport = styled.div`
  width: 119px;
  padding: 4px 0 0 6px;
  display: flex;
  flex-direction: column;
  gap: 3px;
`;
const ButtonRow = styled.div`
  display: flex;
  gap: 1px;
`;
const Frame = styled.div<{ $w: number; $dark?: boolean; $h?: number }>`
  width: ${(p) => p.$w}px;
  height: ${(p) => p.$h ?? 13}px;
  padding-left: 2px;
  background: ${(p) => (p.$dark ? "#0c0c0c" : "#212121")};
  color: #ccc;
  font: 5.6px/${(p) => p.$h ?? 13}px "DejaVu Sans Mono", monospace;
`;
const TimeCol = styled.div`
  width: 547px;
  display: flex;
  flex-direction: column;
`;
const Ruler = styled.svg`
  display: block;
  width: 547px;
  height: 21px;
`;
const RangeRow = styled.div`
  display: flex;
  align-items: center;
  height: 13px;
`;
const RangeLine = styled.i`
  flex: 1;
  height: 2px;
  background: #666;
`;
const KeyButton = styled.div`
  width: 20px;
  height: 20px;
  margin-top: 8px;
  border-radius: 50%;
  background: #222;
  border: 1px solid #383838;
  display: flex;
  align-items: center;
  justify-content: center;
`;
const KeyDrop = styled.div`
  width: 8px;
  height: 11px;
  margin: 12px 4px 0 0;
  display: flex;
  align-items: center;
  background: #393939;
`;
const ChannelCol = styled.div`
  display: flex;
  flex-direction: column;
  gap: 2.5px;
  padding-top: 4px;
`;
const ChannelRow = styled.div`
  display: flex;
  align-items: center;
  gap: 3px;
`;
const ChannelButton = styled.div<{ $center?: boolean }>`
  width: 79px;
  height: 12px;
  display: flex;
  align-items: center;
  justify-content: space-between;
  padding-left: ${(p) => (p.$center ? 9 : 7)}px;
  background: linear-gradient(#4b4b4b, #3e3e3e);
  font-size: 5.8px;
  color: #c8c8c8;
`;
const Status = styled.div`
  flex: none;
  height: 16px;
  display: flex;
  justify-content: flex-end;
  background: #121212;
`;
const StatusTools = styled.div`
  width: 88px;
  display: flex;
  align-items: center;
  gap: 4px;
  padding-left: 2px;
  background: #2a2a2a;
`;
const UpdateMode = styled.div`
  width: 47px;
  height: 13px;
  line-height: 13px;
  text-align: center;
  font-size: 5.8px;
  background: #404040;
`;

const tick = (f: number) => 117.3 + (f / 24) * 54.5;

const TimeRuler = () => (
  <Ruler viewBox="119 368 547 21" fontFamily="Noto Sans CJK SC">
    <path d="M119.500 379.500H665" stroke="#8a8a8a" />
    {Array.from({ length: 40 }, (_, i) => (i + 1) * 6).map((f) => (
      <path key={f} d={`M${tick(f)} ${f % 24 ? 377 : 375.5}V${f % 24 ? 382 : 383.5}`} stroke="#8a8a8a" strokeWidth=".8" />
    ))}
    {[24, 48, 72, 96, 120, 144, 168, 192, 216].map((f) => (
      <text key={f} x={tick(f)} y="373.500" fontSize="5.200" fill="#8f8f8f">{f}</text>
    ))}
    <text x="662.500" y="373.500" fontSize="5.200" fill="#8f8f8f">2</text>
    <path d="M119.500 379V369.500h12v8.500h-9z" fill="#0a0a0a" stroke="#aaa" />
    <text x="123.500" y="376.500" fontSize="7" fill="#ddd">1</text>
  </Ruler>
);

const Playback = () => (
  <PlayBar>
    <Transport>
      <ButtonRow>
        {["first", "prev", "stop", "next", "last"].map((n) => <Cell key={n} $w={13.3} $h={14} $box $hl={n === "stop"}><Icon n={n} s={12} /></Cell>)}
        <Frame $w={24} $h={14} $dark>1</Frame>
        <Gap $w={1} />
        <Cell $w={6} $h={14} $box><Icon n="stepB" s={6} /></Cell>
        <Cell $w={6} $h={14} $box><Icon n="stepF" s={6} /></Cell>
      </ButtonRow>
      <ButtonRow>
        {["doc", "speaker", "loop", "clock"].map((n) => <Cell key={n} $w={13.2} $h={12} $box><Icon n={n} s={10} /></Cell>)}
        <Gap $w={1} />
        {["keyL", "keyR"].map((n) => <Cell key={n} $w={11} $h={12}><Icon n={n} s={8} /></Cell>)}
      </ButtonRow>
    </Transport>
    <TimeCol>
      <TimeRuler />
      <RangeRow>
        <Frame $w={22} $h={11}>1</Frame><Gap $w={1} /><Frame $w={22} $h={11} $dark>1</Frame>
        <Icon n="next" s={6} /><RangeLine /><Icon n="prev" s={6} />
        <Frame $w={21} $h={11} $dark>240</Frame><Gap $w={2} /><Frame $w={21} $h={11}>240</Frame><Gap $w={2} />
      </RangeRow>
    </TimeCol>
    <KeyButton><Icon n="keyBig" s={9} /></KeyButton>
    <KeyDrop><Icon n="down" s={7} /></KeyDrop>
    <ChannelCol>
      <ChannelRow><Icon n="channels" s={11} /><ChannelButton $center>0 keys, 0/0 channels<Icon n="up" s={7} /></ChannelButton></ChannelRow>
      <ChannelRow><Icon n="graph" s={11} /><ChannelButton>Key All Channels<Stepper><Icon n="updown" s={6} /></Stepper></ChannelButton></ChannelRow>
    </ChannelCol>
  </PlayBar>
);

/* ---------- annotations drawn over the panes ---------- */

const Annotations = styled.svg`
  position: absolute;
  inset: 0;
  width: 793px;
  height: 419px;
  pointer-events: none;
`;

const Notes = () => (
  <Annotations viewBox="0 0 793 419" fontFamily="Noto Sans CJK SC" fontSize="12">
    <defs>
      <linearGradient id="fade" gradientUnits="userSpaceOnUse" x1="480" x2="685" y1="0" y2="0">
        <stop offset="0" stopColor="#f00" /><stop offset="1" stopColor="#f00" stopOpacity=".1" />
      </linearGradient>
    </defs>
    <path d="M153.500 240.300l7.500-3.800v2.400L400 249.100 660 259.200l25 1.300-25-.5L400 251.200 161 242.400v2z" fill="url(#fade)" />
    <path d="M83 236.200l57.500 14.400 1.400-2.600 6 8-10.300 1.700 1.300-2.800z" fill="#f00" />
    <path d="M84 300.800l43.500-21.600-1.200-2.200 9.600.6-5.600 7-.8-2.500z" fill="#f00" />
    <text x="75" y="227.500" fontWeight="300" fill="#e81818">会出现接缝</text>
    <text x="450" y="295.500" fontWeight="300" fill="#cc1010">挖洞</text>
  </Annotations>
);

export default function App() {
  return (
    <>
      <Global />
      <Window>
        <TopMenu>
          <Gap $w={7} />
          <TopItem $w={15}>File</TopItem><TopItem $w={16}>Edit</TopItem><TopItem $w={25}>Render</TopItem>
          <TopItem $w={22}>Assets</TopItem><TopItem $w={30}>Windows</TopItem><TopItem $w={27}>Help</TopItem>
          <Combo $w={54}><Icon n="layout" s={8} />LG_Clean</Combo>
          <Cell $w={12} $h={10}><Icon n="updown" s={6} /></Cell><Gap $w={2} />
          <Combo $w={55}><Icon n="compass" s={8} />Main</Combo>
          <Cell $w={10} $h={10}><Icon n="updown" s={6} /></Cell>
          <Grow />
          <Combo $w={79}><Icon n="clap" s={9} />Main</Combo>
          <Cell $w={12} $h={10}><Icon n="updown" s={6} /></Cell>
          <Icon n="help" s={9} /><Gap $w={4} />
        </TopMenu>
        <Seam />
        <Workspace>
          <ScenePane />
          <Divider />
          <NetworkPane />
        </Workspace>
        <Playback />
        <Status>
          <StatusTools>
            <Icon n="brain" s={12} /><Icon n="refresh" s={10} />
            <UpdateMode>Auto Update</UpdateMode><Icon n="updown" s={6} />
          </StatusTools>
        </Status>
        <Notes />
      </Window>
    </>
  );
}
